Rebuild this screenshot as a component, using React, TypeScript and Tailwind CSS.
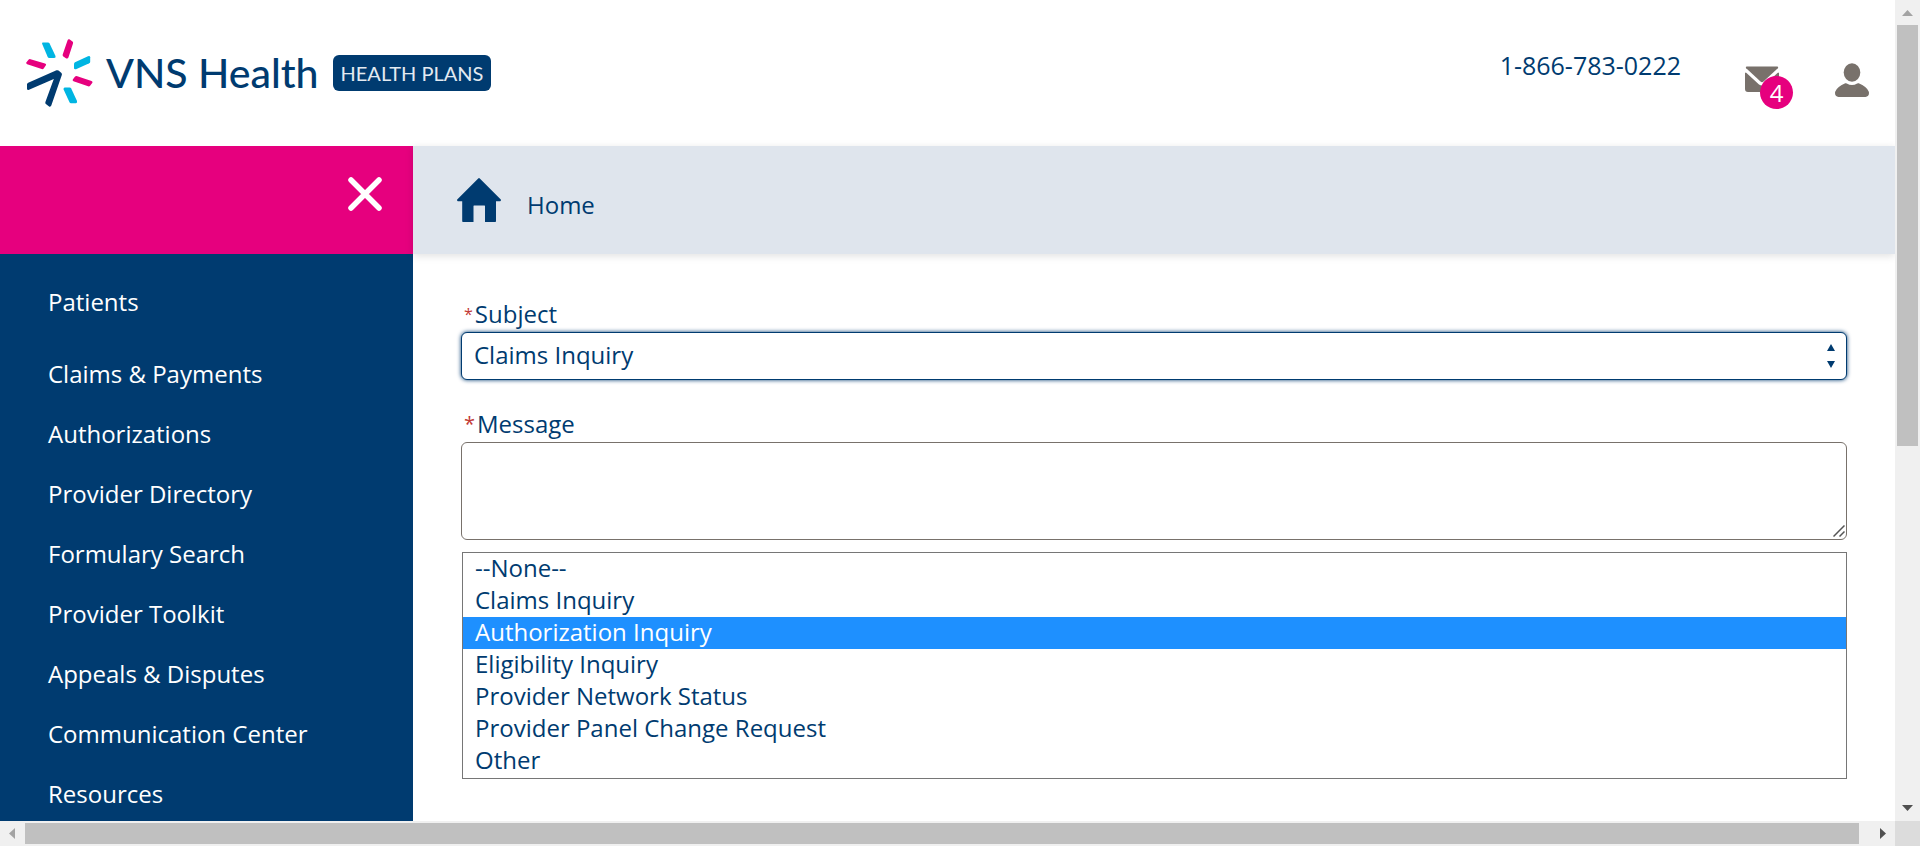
import { useState } from "react";

const NAV_ITEMS = [
  "Claims & Payments",
  "Authorizations",
  "Provider Directory",
  "Formulary Search",
  "Provider Toolkit",
  "Appeals & Disputes",
  "Communication Center",
  "Resources",
];

const SUBJECTS = [
  "--None--",
  "Claims Inquiry",
  "Authorization Inquiry",
  "Eligibility Inquiry",
  "Provider Network Status",
  "Provider Panel Change Request",
  "Other",
];

function LogoMark() {
  return (
    <svg viewBox="0 0 68 70" className="h-[70px] w-[68px] shrink-0" aria-hidden="true">
      <g fill="#00b5e2">
        <path d="M16.5 4.5h5.5q1 0 1.600 1l5.900 12.400q.6 2-1.300 2.100h-5q-1 0-1.500-1L16.200 6q-.4-1 .3-1.500z" />
        <path d="M49 24.200 62 18.200q2-.7 2.200 1v4.500q0 1-1 1.500L50 31.200q-1.800.6-2-1v-4q0-1.300 1-2z" />
        <path d="M38.600 49.500h5q1.100 0 1.600 1l5.800 12.500q.6 2-1 2.200h-5q-1 0-1.500-1L37.600 51.500q-.5-1.700 1-2z" />
      </g>
      <g fill="#e6007e">
        <path d="M43.400 1.300 46.500 3.500q.9.700.5 1.900l-4.500 13.800q-.7 1.900-2.200 1.200l-3-2q-1-.8-.6-2L41.500 2.400q.6-1.700 1.900-1.100z" />
        <path d="M4.500 21.200 19 25.400q1.500.5.900 1.800l-2.200 3.300q-.8 1-2 .6L1.200 26.200q-1.500-.6-.9-1.700l2.200-2.700q.8-1 2-.6z" />
        <path d="M51.300 38.200 65.500 43q1.500.6.900 1.800l-2.300 3q-.8.900-2 .5L47.500 43.200q-1.300-.5-.7-1.600l2.300-3q.8-.9 2.200-.4z" />
      </g>
      <path
        fill="#003b70"
        d="M1 46.500q0-1.200 1.200-1.800L30.500 32.300q1.100-.4 2 .2l2.700 2.200q1 .8.700 2L25.300 67.500q-.7 1.700-2.200.9l-3.200-2.300q-1-.7-.5-2L27.800 41 3 51.700Q1.200 52.400 1 50.700z"
      />
    </svg>
  );
}

function Header() {
  return (
    <header className="flex h-[146px] shrink-0 items-start justify-between">
      <a href="#home" className="mt-[38px] ml-[26px] flex items-center text-[#003b70]">
        <LogoMark />
        <span className="ml-3 font-[Lato,sans-serif] text-[41px] leading-[52px] font-medium whitespace-nowrap">
          VNS Health
        </span>
        <span className="ml-[14px] flex h-9 items-center rounded-md bg-[#003b70] px-2 font-[Lato,sans-serif] text-[20px] whitespace-nowrap text-[#e3eaf1]">
          HEALTH PLANS
        </span>
      </a>
      <div className="mr-[26px] flex items-start">
        <a href="tel:1-866-783-0222" className="mt-[47px] mr-16 text-[25px] leading-9">
          1-866-783-0222
        </a>
        <button type="button" aria-label="Messages" className="relative mt-[66px] mr-[56px] block">
          <svg viewBox="0 0 34 26" className="h-[26px] w-[34px]" fill="#78716b" aria-hidden="true">
            <path d="M1.500.5h31q1.300.7.3 1.800L18.500 15.600q-1.500 1.200-3 0L1.200 2.300Q.2 1 1.500.5z" />
            <path d="M0 7.200q.5-1.200 1.500-.3l12.500 11.500q3 2.300 6 0L32.500 6.900q1-.7 1.500.3V23q0 3-3 3H3q-3 0-3-3z" />
          </svg>
          <span className="absolute top-[10px] left-[15px] flex size-[33px] items-center justify-center rounded-full bg-[#e6007e] text-[24px] leading-none text-white">
            4
          </span>
        </button>
        <button type="button" aria-label="Profile" className="mt-[63px] block">
          <svg viewBox="0 0 34 34" className="size-[34px]" fill="#78716b" aria-hidden="true">
            <ellipse cx="17" cy="9.500" rx="8.300" ry="9.300" />
            <path d="M10.300 20.300q.8-.3 1.500.2 5.200 3 10.400 0 .7-.5 1.500-.2 8 3.400 10 8.200.3.700.3 1.500-.1 3.800-3.500 3.900h-27Q.1 33.800 0 30q0-.8.300-1.500 2-4.800 10-8.200z" />
          </svg>
        </button>
      </div>
    </header>
  );
}

function Sidebar() {
  return (
    <aside className="flex w-[413px] shrink-0 flex-col overflow-hidden bg-[#003b70] text-white">
      <div className="flex h-[108px] shrink-0 justify-end bg-[#e6007e] pt-[30px] pr-[30px]">
        <button type="button" aria-label="Close menu" className="size-9">
          <svg viewBox="0 0 36 36" className="size-9" stroke="#fff" strokeWidth="5.500" strokeLinecap="round" aria-hidden="true">
            <path d="M4 4 32 32M32 4 4 32" />
          </svg>
        </button>
      </div>
      <nav className="flex flex-col pt-[18px] pl-12 text-[24px] leading-[60px]">
        <a href="#patients" className="mb-3">
          Patients
        </a>
        {NAV_ITEMS.map((item) => (
          <a key={item} href="#section">
            {item}
          </a>
        ))}
      </nav>
    </aside>
  );
}

function InquiryForm() {
  const [subject, setSubject] = useState("Claims Inquiry");
  return (
    <form className="flex flex-col pt-11 pr-12 pl-12 text-[24px]">
      <label htmlFor="subject" className="flex items-center gap-0.5 pb-0.5 pl-[3px] leading-8">
        <span className="text-[16px] text-[#c23934]">*</span>
        Subject
      </label>
      <div className="relative">
        <select
          id="subject"
          value={subject}
          onChange={(e) => setSubject(e.target.value)}
          className="block h-12 w-full appearance-none rounded-md border border-[#003b70] bg-white px-3 pb-0.5 shadow-[0_0_4px_#003b70] outline-none"
        >
          {SUBJECTS.map((s) => (
            <option key={s}>{s}</option>
          ))}
        </select>
        <svg viewBox="0 0 8 24" className="pointer-events-none absolute top-3 right-3 h-6 w-2" fill="#003b70" aria-hidden="true">
          <path d="M4 0 8 7H0zM0 17h8l-4 7z" />
        </svg>
      </div>
      <label htmlFor="message" className="mt-7 flex items-center gap-0.5 pb-0.5 pl-[3px] leading-8">
        <span className="text-[20px] text-[#c23934]">*</span>
        Message
      </label>
      <div className="relative">
        <textarea
          id="message"
          className="block h-[98px] w-full resize-none rounded-md border border-[#78716b] bg-white px-3 py-2 outline-none"
        />
        <svg viewBox="0 0 12 12" className="pointer-events-none absolute right-[2px] bottom-[3px] size-3" stroke="#555" strokeWidth="1.500" aria-hidden="true">
          <path d="M.5 11.500 11.500.5M6.500 11.500l5-5" />
        </svg>
      </div>
      <ul role="listbox" aria-label="Subject options" className="mt-3 ml-px border border-[#767676] bg-white pb-px leading-[30px]">
        {SUBJECTS.map((s) => (
          <li
            key={s}
            role="option"
            aria-selected={s === "Authorization Inquiry"}
            onClick={() => setSubject(s)}
            className="px-3 pb-0.5 aria-selected:bg-[#1e90ff] aria-selected:text-white"
          >
            {s}
          </li>
        ))}
      </ul>
    </form>
  );
}

function VerticalScrollbar() {
  return (
    <div className="flex flex-col items-center bg-[#f0f0f0]" aria-hidden="true">
      <svg viewBox="0 0 25 25" className="size-[25px] shrink-0" fill="#a3a3a3">
        <path d="M7 16h11l-5.500-6z" />
      </svg>
      <div className="h-[51.300%] w-[21px] bg-[#c0c0c0]" />
      <svg viewBox="0 0 25 25" className="mt-auto size-[25px] shrink-0" fill="#505050">
        <path d="M7 9h11l-5.500 6z" />
      </svg>
    </div>
  );
}

function HorizontalScrollbar() {
  return (
    <div className="flex items-center bg-[#f0f0f0]" aria-hidden="true">
      <svg viewBox="0 0 25 25" className="size-[25px] shrink-0" fill="#a3a3a3">
        <path d="M15 7v11l-6-5.500z" />
      </svg>
      <div className="mr-[11px] h-[21px] flex-1 bg-[#c0c0c0]" />
      <svg viewBox="0 0 25 25" className="size-[25px] shrink-0" fill="#505050">
        <path d="M10 7v11l6-5.500z" />
      </svg>
    </div>
  );
}

export default function App() {
  return (
    <div className="grid h-screen grid-cols-[minmax(0,1fr)_25px] grid-rows-[minmax(0,1fr)_25px] bg-white font-['Open_Sans',sans-serif] text-[#003b70]">
      <div className="flex flex-col overflow-hidden">
        <Header />
        <div className="flex min-h-0 flex-1">
          <Sidebar />
          <main className="min-w-0 flex-1">
            <div className="flex h-[108px] items-center bg-[#dfe5ed] pl-11 shadow-[0_2px_8px_rgba(0,0,0,0.12)]">
              <a href="#home" className="flex items-center gap-[26px] text-[24px]">
                <svg viewBox="0 0 44 44" className="size-11" fill="#003b70" aria-hidden="true">
                  <path d="M21.200.4q.8-.8 1.600 0L43.800 21.600q.5 1.200-.6 1.600H39V43.200q0 .8-.8.800H28V28q0-.5-.5-.5H17q-.5 0-.5.500V44H6q-.8 0-.8-.8V23.200H.8q-1.100-.4-.6-1.600z" />
                </svg>
                <span className="pt-2.5">Home</span>
              </a>
            </div>
            <InquiryForm />
          </main>
        </div>
      </div>
      <VerticalScrollbar />
      <HorizontalScrollbar />
      <div className="bg-[#dcdcdc]" />
    </div>
  );
}
